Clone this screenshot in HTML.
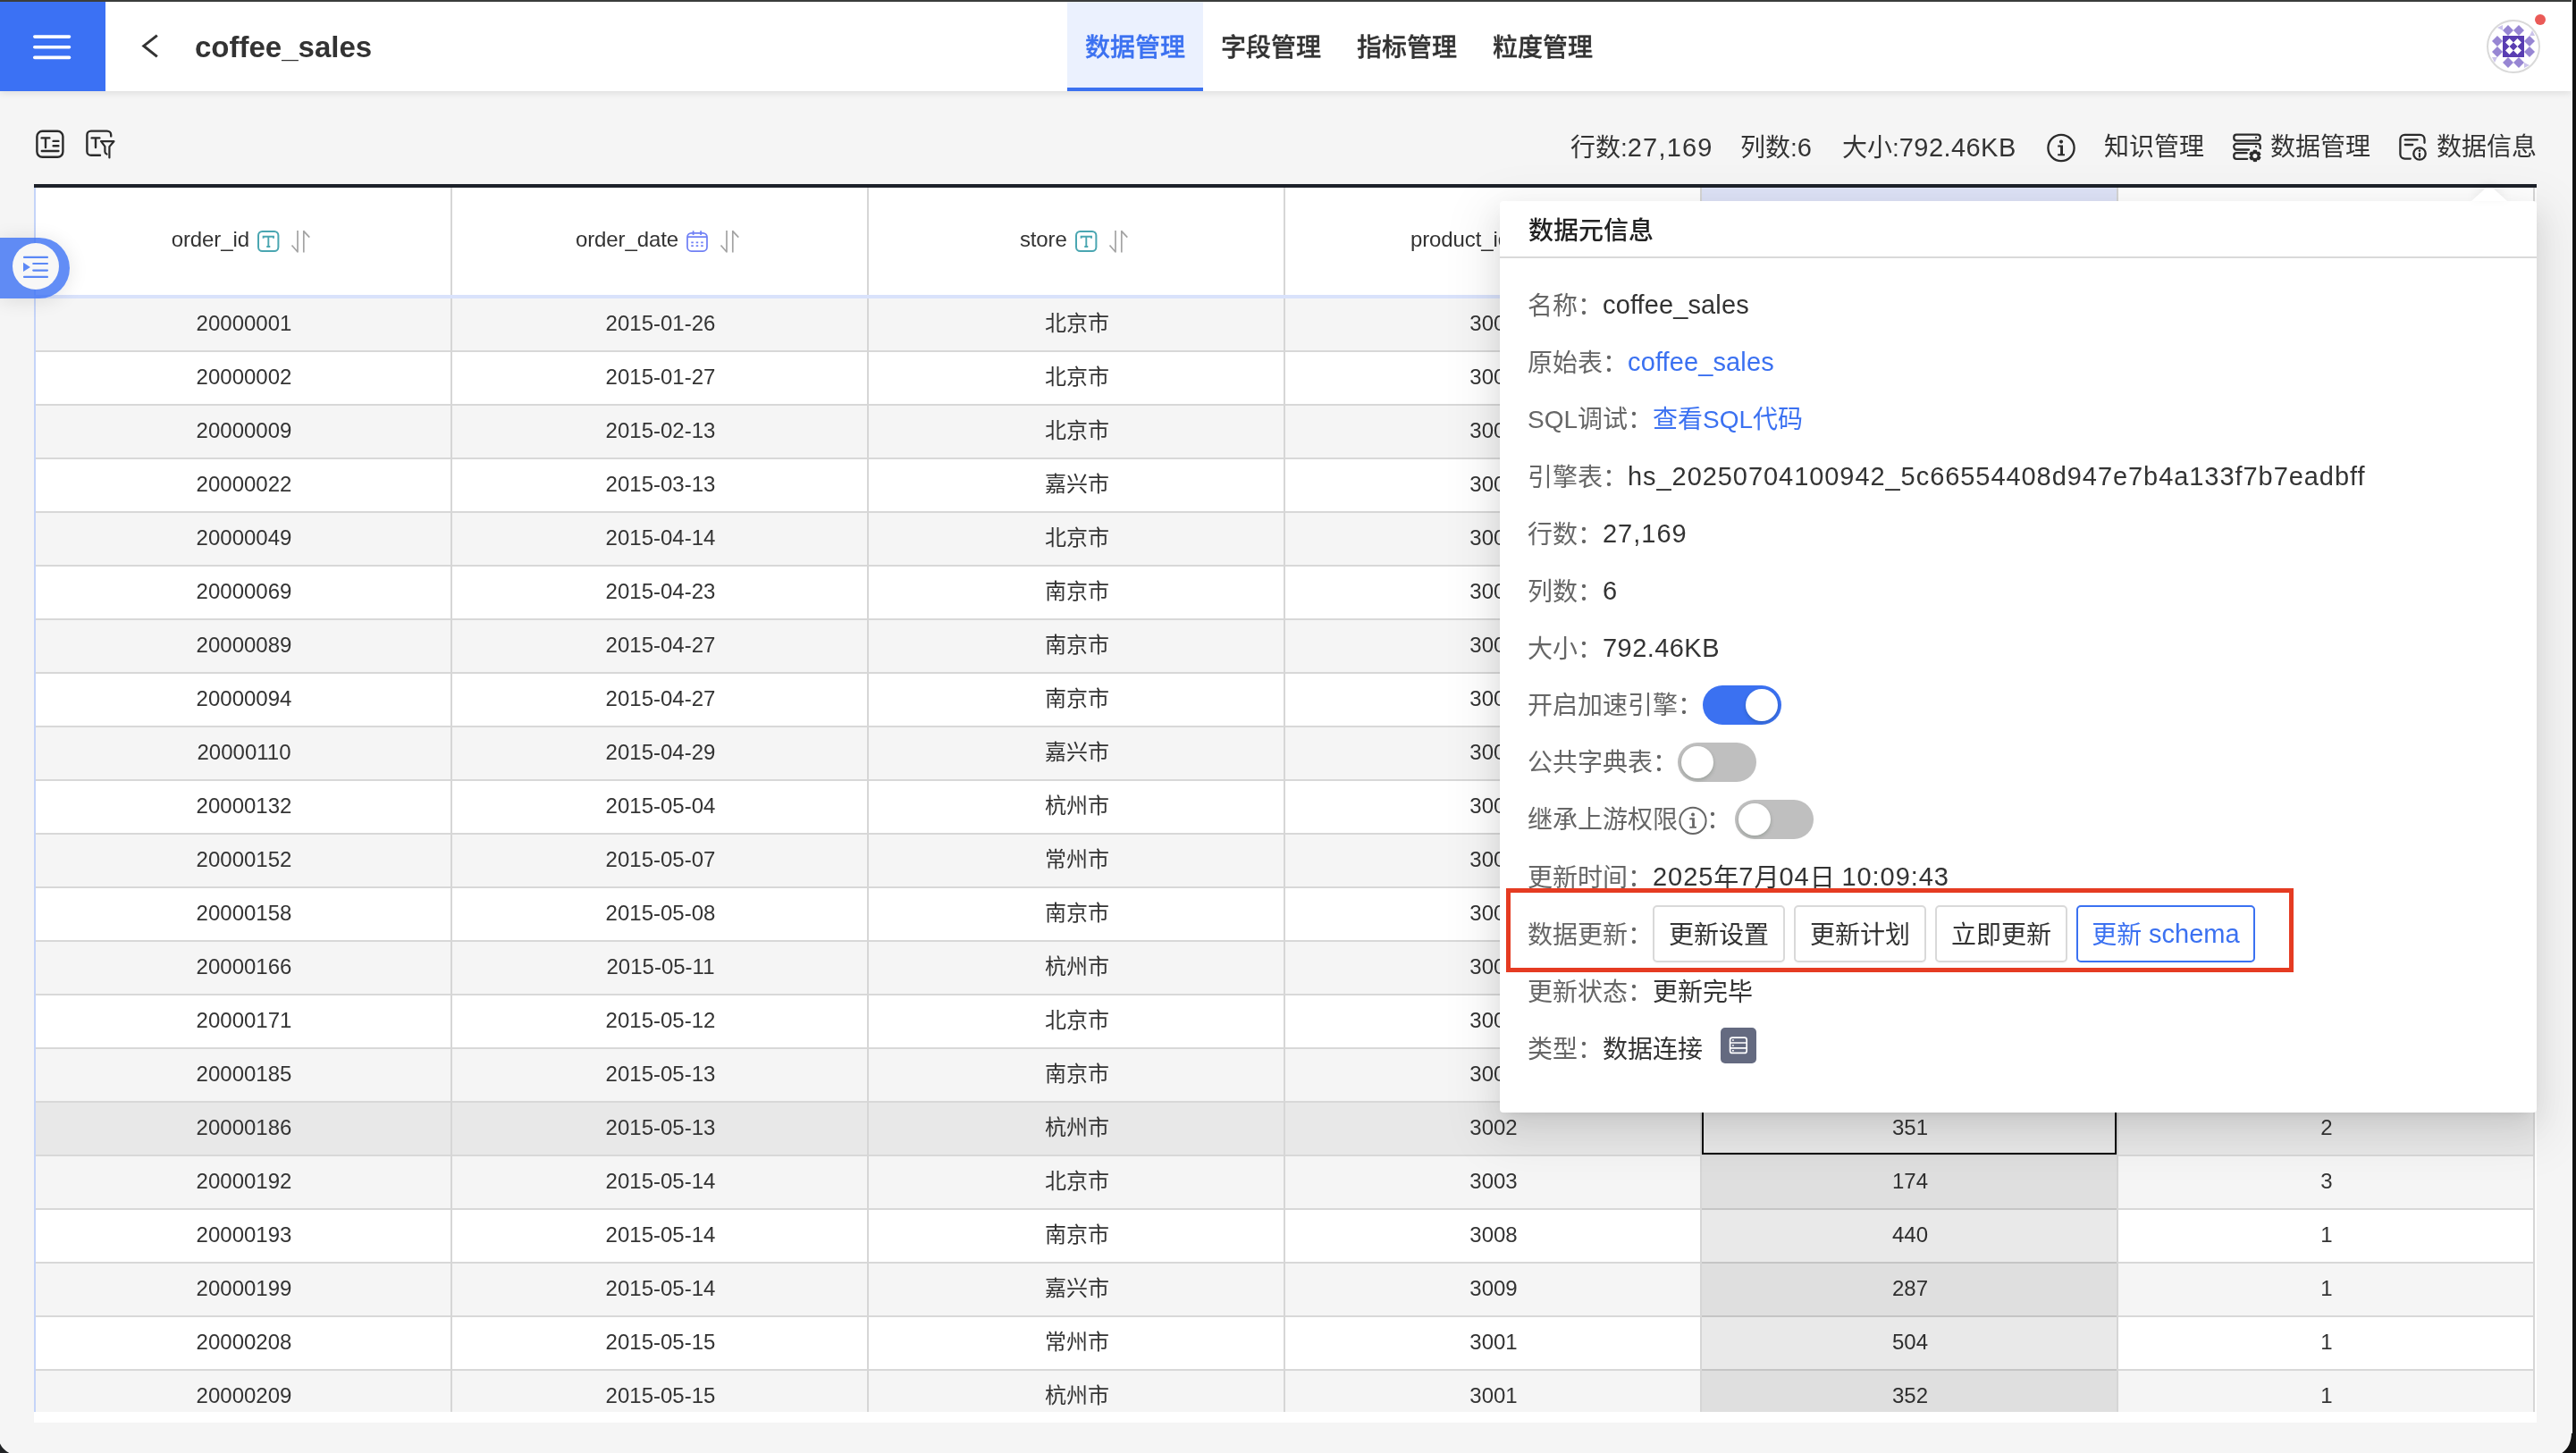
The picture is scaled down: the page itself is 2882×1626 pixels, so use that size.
<!DOCTYPE html>
<html lang="zh-CN">
<head>
<meta charset="utf-8">
<title>coffee_sales</title>
<style>
*{box-sizing:border-box;margin:0;padding:0}
html,body{width:2882px;height:1626px;overflow:hidden;background:#111}
body{position:relative;font-family:"Liberation Sans","Noto Sans CJK SC",sans-serif;color:#333;-webkit-font-smoothing:antialiased}
.abs{position:absolute}
#win{position:absolute;left:0;top:0;width:2877px;height:1626px;background:#f5f5f5;overflow:hidden;will-change:transform}
#wstrip{position:absolute;left:2877px;top:0;width:1px;height:1604px;background:#fff}
#topbar{position:absolute;left:0;top:0;width:2877px;height:2px;background:#3b3d3c;z-index:50}
#hdr{position:absolute;left:0;top:2px;width:2877px;height:100px;background:#fff;box-shadow:0 2px 8px rgba(0,0,0,.10);z-index:5}
#menu{position:absolute;left:0;top:0;width:118px;height:100px;background:#3b71f4}
#title{position:absolute;left:218px;top:31px;font-size:33px;line-height:40px;font-weight:700;color:#333;white-space:nowrap;letter-spacing:0}
.tab{position:absolute;top:0;width:152px;height:100px;text-align:center;font-size:28px;line-height:104px;font-weight:500;color:#333;white-space:nowrap;-webkit-text-stroke:0.35px currentColor}
.tab.on{background:#ebf1fe;color:#3b71f1;border-bottom:4px solid #3b71f1}
#tools{position:absolute;left:0;top:102px;width:2877px;height:104px}
.tt{position:absolute;top:143px;font-size:28px;line-height:44px;color:#333;white-space:nowrap}
/* table */
#tbl{position:absolute;left:38px;top:210px;width:2800px;height:1370px;background:#fff;overflow:hidden}
#tline{position:absolute;left:38px;top:206px;width:2800px;height:4px;background:#1d2129;z-index:3}
#tfoot{position:absolute;left:38px;top:1580px;width:2800px;height:12px;background:#fff}
.th{position:absolute;top:0;height:120px;width:464px;font-size:24px;color:#333}
.th .lab{position:absolute;top:42px;line-height:36px;white-space:nowrap}
.row{position:absolute;left:2px;width:2796px;border-bottom:2px solid #d8d8d8}
.row.odd{background:#f5f5f5}
.row.even{background:#fff}
.row.hov{background:#e8e8e8}
.c{position:absolute;top:0;width:464px;height:58px;line-height:56px;padding-right:2px;text-align:center;font-size:24px;color:#333;white-space:nowrap}
.c.cj{font-family:"Liberation Sans","Noto Sans CJK SC",sans-serif}
.vline{position:absolute;top:0;width:2px;height:1370px;background:#d6d6d6;z-index:2}
#lb{position:absolute;left:0;top:0;width:2px;height:1370px;background:#c5d4f8;z-index:2}
#hline{position:absolute;left:0;top:120px;width:2800px;height:4px;background:#d9e2fb;z-index:2}
#col5h{position:absolute;left:1866px;top:0;width:464px;height:120px;background:#dfe4f8}
.col5{position:absolute;left:1866px;width:464px;background:rgba(0,0,0,.085);z-index:1}
#sel{position:absolute;left:1866px;top:1024px;width:464px;height:58px;border:2px solid #000;z-index:3}
/* float */
#flt{position:absolute;left:0;top:266px;width:78px;height:68px;border-radius:0 34px 34px 0;background:rgba(59,113,244,.8);box-shadow:0 2px 22px rgba(0,0,0,.11);z-index:6}
#flt i{position:absolute;left:14px;top:6px;width:52px;height:52px;border-radius:50%;background:#f7f7f7}
/* popup */
#pop{position:absolute;left:1678px;top:225px;width:1160px;height:1020px;background:#fff;border-radius:4px;box-shadow:0 18px 56px 16px rgba(0,0,0,.065),0 12px 32px rgba(0,0,0,.08),0 6px 12px -8px rgba(0,0,0,.12);z-index:10}
#pop .ttl{position:absolute;left:32px;top:13.5px;font-size:28px;line-height:40px;font-weight:500;color:#222;white-space:nowrap}
#pop .hr{position:absolute;left:0;top:62px;width:1160px;height:2px;background:#d9d9d9}
.pr{position:absolute;left:31px;height:44px;line-height:44px;font-size:28px;white-space:nowrap;color:#333}
.pr .l{color:#666}
.pr .a{color:#3b71f1}
.sw{position:absolute;width:88px;height:44px;border-radius:22px;background:#bfbfbf}
.sw i{position:absolute;left:4px;top:4px;width:36px;height:36px;border-radius:50%;background:#fff;box-shadow:0 2px 4px rgba(0,35,11,.2)}
.sw.on{background:#3b71f1}
.sw.on i{left:48px}
.btn{position:absolute;top:788px;height:64px;border:2px solid #d9d9d9;border-radius:5px;background:#fff;font-size:28px;line-height:63px;text-align:center;color:#333;white-space:nowrap;box-shadow:0 2px 0 rgba(0,0,0,.015)}
.btn.pri{border-color:#3b71f1;color:#3b71f1}
#red{position:absolute;left:7px;top:769px;width:881px;height:94px;border:5px solid #e53b22}
#arrow{position:absolute;left:1087px;top:-15px;width:40px;height:15px;filter:drop-shadow(0 -3px 5px rgba(0,0,0,.07))}
svg{display:block;overflow:visible}

.th{display:flex;align-items:center;justify-content:center;padding-right:5.5px}
.th .lab{position:relative;top:-2.500px;line-height:36px}
.th .ic{margin-left:9.300px}
.th .so{margin-left:13.600px;margin-top:0.5px}
.n{font-size:29px}
.th .lab{letter-spacing:-0.1px}
.row.last{border-bottom:0}
#pop .n{position:relative;top:-1px}

</style>
</head>
<body>
<div id="win">
  <div id="topbar"></div>
  <div id="hdr">
    <div id="menu">
      <svg class="abs" style="left:0;top:0" width="118" height="100" viewBox="0 0 118 100"><g fill="#fff"><rect x="37" y="37.3" width="42.3" height="3.6" rx="1.8"/><rect x="37" y="49" width="42.3" height="3.6" rx="1.8"/><rect x="37" y="60.6" width="42.3" height="3.6" rx="1.8"/></g></svg>
    </div>
    <svg class="abs" style="left:150px;top:30px" width="40" height="44" viewBox="150 32 40 44"><polyline points="175.8,39.6 160.8,51.4 175.8,63.4" fill="none" stroke="#333" stroke-width="3" stroke-linejoin="miter"/></svg>
    <div id="title">coffee_sales</div>
    <div class="tab on" style="left:1194px">数据管理</div>
    <div class="tab" style="left:1346px">字段管理</div>
    <div class="tab" style="left:1498px">指标管理</div>
    <div class="tab" style="left:1650px">粒度管理</div>
    <svg class="abs" style="left:2772px;top:6px" width="90" height="90" viewBox="2772 8 90 90">
      <circle cx="2812" cy="52" r="29" fill="#fff" stroke="#d9d9d9" stroke-width="2"/>
      <rect x="2800" y="40" width="24" height="24" fill="#593db2"/>
      <g fill="#fff"><path d="M2807.5 43l4.5 4.5-4.5 4.5-4.5-4.5z"/><path d="M2816.5 43l4.500 4.500-4.500 4.500-4.500-4.500z"/><path d="M2807.5 52l4.500 4.500-4.500 4.500-4.500-4.500z"/><path d="M2816.5 52l4.500 4.500-4.500 4.500-4.500-4.500z"/></g>
      <g fill="#9786d3">
        <path d="M2806 28l6 6-6 6-6-6z"/><path d="M2818 28l6 6-6 6-6-6z"/>
        <path d="M2806 64l6 6-6 6-6-6z"/><path d="M2818 64l6 6-6 6-6-6z"/>
        <path d="M2794 40l6 6-6 6-6-6z"/><path d="M2794 52l6 6-6 6-6-6z"/>
        <path d="M2830 40l6 6-6 6-6-6z"/><path d="M2830 52l6 6-6 6-6-6z"/>
      </g>
      <g fill="#cbc3ea">
        <path d="M2794 31L2800 28L2800 34z"/>
        <path d="M2833 34L2836 40L2830 40z"/>
        <path d="M2830 73L2824 76L2824 70z"/>
        <path d="M2791 70L2788 64L2794 64z"/>
      </g>
      <circle cx="2842" cy="22" r="6" fill="#ea5a57"/>
    </svg>
  </div>

  <svg class="abs" style="left:30px;top:136px" width="110" height="50" viewBox="30 136 110 50" fill="none" stroke="#2b2b2b" stroke-width="2.4" stroke-linecap="round" stroke-linejoin="round">
    <rect x="41.4" y="146.8" width="29" height="29" rx="6"/>
    <path d="M46.6 154.4h8.8M51 154.4v10.6M59.6 157.9h5.8M59.6 163.3h5.8M46.8 169h18.6"/>
    <path d="M124.2 152.4v-1.4a4.4 4.4 0 0 0-4.4-4.400h-18a4.400 4.400 0 0 0-4.400 4.400v18.400a4.400 4.400 0 0 0 4.400 4.400h10.200"/>
    <path d="M102.600 154.400h8.800M107 154.400v10.600"/>
    <path d="M113 158.200h14.400l-5 5.900v12.300M113 158.200l4.400 5.700v6q0.100 1.900 2.100 2.700" stroke-width="2.200"/>
  </svg>
  <div class="tt" style="left:1757px">行数:<span class="n" style="letter-spacing:1.20px">27,169</span></div>
  <div class="tt" style="left:1947px">列数:<span class="n" style="letter-spacing:0.90px">6</span></div>
  <div class="tt" style="left:2061px">大小:<span class="n" style="letter-spacing:0.44px">792.46KB</span></div>
  <svg class="abs" style="left:2286px;top:145px" width="40" height="40" viewBox="2286 145 40 40"><circle cx="2306" cy="165.500" r="14.600" fill="none" stroke="#2b2b2b" stroke-width="2.300"/><circle cx="2306" cy="158.600" r="2.050" fill="#2b2b2b"/><path d="M2302.200 162.500h5.800v9.700h2v2h-7.800v-2h2.900v-7.700h-2.900z" fill="#2b2b2b"/></svg>
  <div class="tt" style="left:2354px">知识管理</div>
  <svg class="abs" style="left:2494px;top:145px" width="40" height="40" viewBox="2494 145 40 40" fill="none" stroke="#2b2b2b" stroke-width="2.300" stroke-linecap="round" stroke-linejoin="round">
    <rect x="2499.300" y="150.700" width="29.400" height="6.600" rx="2.900"/>
    <path d="M2528.700 166.200v-2.400a2.900 2.900 0 0 0-2.900-2.900h-23.600a2.900 2.900 0 0 0-2.900 2.900v0.800a2.900 2.900 0 0 0 2.900 2.900h13.800"/>
    <path d="M2513.600 171.200h-11.400a2.900 2.900 0 0 0-2.900 2.900v0.800a2.900 2.900 0 0 0 2.900 2.900h12"/>
    <circle cx="2524" cy="154.100" r="1.100" fill="#2b2b2b" stroke="none"/><circle cx="2524" cy="164.100" r="1.100" fill="#2b2b2b" stroke="none"/>
    <path d="M2521.33 168.09L2524.47 168.09L2525.30 170.24L2527.58 169.88L2529.15 172.61L2527.70 174.40L2529.15 176.19L2527.58 178.92L2525.30 178.56L2524.47 180.71L2521.33 180.71L2520.50 178.56L2518.22 178.92L2516.65 176.19L2518.10 174.40L2516.65 172.61L2518.22 169.88L2520.50 170.24z" fill="#2b2b2b" stroke="#f5f5f5" stroke-width="2.400" paint-order="stroke" stroke-linejoin="round"/>
    <path d="M2521.33 168.09L2524.47 168.09L2525.30 170.24L2527.58 169.88L2529.15 172.61L2527.70 174.40L2529.15 176.19L2527.58 178.92L2525.30 178.56L2524.47 180.71L2521.33 180.71L2520.50 178.56L2518.22 178.92L2516.65 176.19L2518.10 174.40L2516.65 172.61L2518.22 169.88L2520.50 170.24z" fill="#2b2b2b" stroke="#2b2b2b" stroke-width="0.600" stroke-linejoin="round"/>
    <circle cx="2522.900" cy="174.400" r="2.500" fill="#f5f5f5" stroke="none"/>
  </svg>
  <div class="tt" style="left:2540px">数据管理</div>
  <svg class="abs" style="left:2680px;top:145px" width="40" height="40" viewBox="2680 145 40 40" fill="none" stroke="#2b2b2b" stroke-width="2.300" stroke-linecap="round" stroke-linejoin="round">
    <path d="M2712.500 159.800v-3.900a5 5 0 0 0-5-5h-17.100a5 5 0 0 0-5 5v16.700a5 5 0 0 0 5 5h6.400"/>
    <path d="M2690.800 156.400h13.800M2690.800 162h8.400"/>
    <circle cx="2707" cy="172" r="6.700"/>
    <circle cx="2707" cy="168.600" r="1.300" fill="#2b2b2b" stroke="none"/><path d="M2707 171.800v3.800" stroke-width="2.200"/>
  </svg>
  <div class="tt" style="left:2726px">数据信息</div>

  <div id="tline"></div>
  <div id="tbl">
    <div id="col5h"></div>
    <div class="th" style="left:2px"><span class="lab">order_id</span><svg class="ic" width="24.4" height="24" viewBox="0 0 24.4 24" fill="none" stroke="#4aa6b1" stroke-width="2"><rect x="1" y="1" width="22.4" height="22" rx="4.5"/><path d="M6.6 8.800v-2h11.400v2M12.300 6.800v11.200M10.300 18h4" stroke-width="1.900"/></svg><svg class="so" width="20.600" height="24.600" viewBox="0 0 20.600 24.600" fill="none" stroke="#a3a3a3" stroke-width="1.700"><path d="M7 0v24.600M7.300 24.300L0.500 16.500M13.800 24.600v-24.600M13.500 0.300l6.800 7.400"/></svg></div>
    <div class="th" style="left:468px"><span class="lab">order_date</span><svg class="ic" width="24" height="24" viewBox="0 0 24 24" fill="none" stroke="#7080f5" stroke-width="1.750"><rect x="1" y="2.800" width="22" height="20.200" rx="4.500"/><path d="M1 7.200h22M7.600 0.300v4.800M16.100 0.300v4.800"/><path d="M5.300 13.400h2.500M10.700 13.400h2.500M16.200 13.400h2.500M5.300 17.100h2.500M10.700 17.100h2.500M16.200 17.100h2.500" stroke-width="1.800"/></svg><svg class="so" width="20.600" height="24.600" viewBox="0 0 20.600 24.600" fill="none" stroke="#a3a3a3" stroke-width="1.700"><path d="M7 0v24.600M7.300 24.300L0.500 16.500M13.800 24.600v-24.600M13.500 0.300l6.800 7.400"/></svg></div>
    <div class="th" style="left:934px"><span class="lab">store</span><svg class="ic" width="24.4" height="24" viewBox="0 0 24.4 24" fill="none" stroke="#4aa6b1" stroke-width="2"><rect x="1" y="1" width="22.4" height="22" rx="4.5"/><path d="M6.6 8.800v-2h11.400v2M12.300 6.800v11.200M10.300 18h4" stroke-width="1.900"/></svg><svg class="so" width="20.600" height="24.600" viewBox="0 0 20.600 24.600" fill="none" stroke="#a3a3a3" stroke-width="1.700"><path d="M7 0v24.600M7.300 24.300L0.500 16.500M13.800 24.600v-24.600M13.500 0.300l6.800 7.400"/></svg></div>
    <div class="th" style="left:1400px"><span class="lab">product_id</span><svg class="ic" width="24" height="24" viewBox="0 0 24 24" fill="none" stroke="#5b8ff9" stroke-width="2"><rect x="1" y="1" width="22" height="22" rx="4.500"/><path d="M9.500 6.500l-1.500 11M15.500 6.500l-1.500 11M6 10h12.500M5.500 14h12.500" stroke-width="1.600"/></svg><svg class="so" width="20.600" height="24.600" viewBox="0 0 20.600 24.600" fill="none" stroke="#a3a3a3" stroke-width="1.700"><path d="M7 0v24.600M7.300 24.300L0.500 16.500M13.800 24.600v-24.600M13.500 0.300l6.800 7.400"/></svg></div>
    <div class="th" style="left:1866px"><span class="lab">sales</span><svg class="ic" width="24" height="24" viewBox="0 0 24 24" fill="none" stroke="#5b8ff9" stroke-width="2"><rect x="1" y="1" width="22" height="22" rx="4.500"/><path d="M9.500 6.500l-1.500 11M15.500 6.500l-1.500 11M6 10h12.500M5.500 14h12.500" stroke-width="1.600"/></svg><svg class="so" width="20.600" height="24.600" viewBox="0 0 20.600 24.600" fill="none" stroke="#a3a3a3" stroke-width="1.700"><path d="M7 0v24.600M7.300 24.300L0.500 16.500M13.800 24.600v-24.600M13.500 0.300l6.800 7.400"/></svg></div>
    <div class="th" style="left:2332px"><span class="lab">quantity</span><svg class="ic" width="24" height="24" viewBox="0 0 24 24" fill="none" stroke="#5b8ff9" stroke-width="2"><rect x="1" y="1" width="22" height="22" rx="4.500"/><path d="M9.500 6.500l-1.500 11M15.500 6.500l-1.500 11M6 10h12.500M5.500 14h12.500" stroke-width="1.600"/></svg><svg class="so" width="20.600" height="24.600" viewBox="0 0 20.600 24.600" fill="none" stroke="#a3a3a3" stroke-width="1.700"><path d="M7 0v24.600M7.300 24.300L0.500 16.500M13.800 24.600v-24.600M13.500 0.300l6.800 7.400"/></svg></div>
    
<div class="row odd" style="top:124px;height:60px"><div class="c c1" style="left:2px">20000001</div><div class="c c2" style="left:468px">2015-01-26</div><div class="c c3 cj" style="left:934px">北京市</div><div class="c c4" style="left:1400px">3001</div><div class="c c5" style="left:1866px">120</div><div class="c c6" style="left:2332px">1</div></div>
<div class="row even" style="top:184px;height:60px"><div class="c c1" style="left:2px">20000002</div><div class="c c2" style="left:468px">2015-01-27</div><div class="c c3 cj" style="left:934px">北京市</div><div class="c c4" style="left:1400px">3002</div><div class="c c5" style="left:1866px">351</div><div class="c c6" style="left:2332px">1</div></div>
<div class="row odd" style="top:244px;height:60px"><div class="c c1" style="left:2px">20000009</div><div class="c c2" style="left:468px">2015-02-13</div><div class="c c3 cj" style="left:934px">北京市</div><div class="c c4" style="left:1400px">3003</div><div class="c c5" style="left:1866px">174</div><div class="c c6" style="left:2332px">2</div></div>
<div class="row even" style="top:304px;height:60px"><div class="c c1" style="left:2px">20000022</div><div class="c c2" style="left:468px">2015-03-13</div><div class="c c3 cj" style="left:934px">嘉兴市</div><div class="c c4" style="left:1400px">3004</div><div class="c c5" style="left:1866px">440</div><div class="c c6" style="left:2332px">1</div></div>
<div class="row odd" style="top:364px;height:60px"><div class="c c1" style="left:2px">20000049</div><div class="c c2" style="left:468px">2015-04-14</div><div class="c c3 cj" style="left:934px">北京市</div><div class="c c4" style="left:1400px">3005</div><div class="c c5" style="left:1866px">287</div><div class="c c6" style="left:2332px">1</div></div>
<div class="row even" style="top:424px;height:60px"><div class="c c1" style="left:2px">20000069</div><div class="c c2" style="left:468px">2015-04-23</div><div class="c c3 cj" style="left:934px">南京市</div><div class="c c4" style="left:1400px">3006</div><div class="c c5" style="left:1866px">504</div><div class="c c6" style="left:2332px">3</div></div>
<div class="row odd" style="top:484px;height:60px"><div class="c c1" style="left:2px">20000089</div><div class="c c2" style="left:468px">2015-04-27</div><div class="c c3 cj" style="left:934px">南京市</div><div class="c c4" style="left:1400px">3007</div><div class="c c5" style="left:1866px">352</div><div class="c c6" style="left:2332px">1</div></div>
<div class="row even" style="top:544px;height:60px"><div class="c c1" style="left:2px">20000094</div><div class="c c2" style="left:468px">2015-04-27</div><div class="c c3 cj" style="left:934px">南京市</div><div class="c c4" style="left:1400px">3008</div><div class="c c5" style="left:1866px">120</div><div class="c c6" style="left:2332px">2</div></div>
<div class="row odd" style="top:604px;height:60px"><div class="c c1" style="left:2px">20000110</div><div class="c c2" style="left:468px">2015-04-29</div><div class="c c3 cj" style="left:934px">嘉兴市</div><div class="c c4" style="left:1400px">3009</div><div class="c c5" style="left:1866px">351</div><div class="c c6" style="left:2332px">1</div></div>
<div class="row even" style="top:664px;height:60px"><div class="c c1" style="left:2px">20000132</div><div class="c c2" style="left:468px">2015-05-04</div><div class="c c3 cj" style="left:934px">杭州市</div><div class="c c4" style="left:1400px">3001</div><div class="c c5" style="left:1866px">174</div><div class="c c6" style="left:2332px">1</div></div>
<div class="row odd" style="top:724px;height:60px"><div class="c c1" style="left:2px">20000152</div><div class="c c2" style="left:468px">2015-05-07</div><div class="c c3 cj" style="left:934px">常州市</div><div class="c c4" style="left:1400px">3002</div><div class="c c5" style="left:1866px">440</div><div class="c c6" style="left:2332px">1</div></div>
<div class="row even" style="top:784px;height:60px"><div class="c c1" style="left:2px">20000158</div><div class="c c2" style="left:468px">2015-05-08</div><div class="c c3 cj" style="left:934px">南京市</div><div class="c c4" style="left:1400px">3003</div><div class="c c5" style="left:1866px">287</div><div class="c c6" style="left:2332px">2</div></div>
<div class="row odd" style="top:844px;height:60px"><div class="c c1" style="left:2px">20000166</div><div class="c c2" style="left:468px">2015-05-11</div><div class="c c3 cj" style="left:934px">杭州市</div><div class="c c4" style="left:1400px">3004</div><div class="c c5" style="left:1866px">504</div><div class="c c6" style="left:2332px">1</div></div>
<div class="row even" style="top:904px;height:60px"><div class="c c1" style="left:2px">20000171</div><div class="c c2" style="left:468px">2015-05-12</div><div class="c c3 cj" style="left:934px">北京市</div><div class="c c4" style="left:1400px">3005</div><div class="c c5" style="left:1866px">352</div><div class="c c6" style="left:2332px">1</div></div>
<div class="row odd" style="top:964px;height:60px"><div class="c c1" style="left:2px">20000185</div><div class="c c2" style="left:468px">2015-05-13</div><div class="c c3 cj" style="left:934px">南京市</div><div class="c c4" style="left:1400px">3006</div><div class="c c5" style="left:1866px">120</div><div class="c c6" style="left:2332px">1</div></div>
<div class="row even hov" style="top:1024px;height:60px"><div class="c c1" style="left:2px">20000186</div><div class="c c2" style="left:468px">2015-05-13</div><div class="c c3 cj" style="left:934px">杭州市</div><div class="c c4" style="left:1400px">3002</div><div class="c c5" style="left:1866px">351</div><div class="c c6" style="left:2332px">2</div></div>
<div class="row odd" style="top:1084px;height:60px"><div class="c c1" style="left:2px">20000192</div><div class="c c2" style="left:468px">2015-05-14</div><div class="c c3 cj" style="left:934px">北京市</div><div class="c c4" style="left:1400px">3003</div><div class="c c5" style="left:1866px">174</div><div class="c c6" style="left:2332px">3</div></div>
<div class="row even" style="top:1144px;height:60px"><div class="c c1" style="left:2px">20000193</div><div class="c c2" style="left:468px">2015-05-14</div><div class="c c3 cj" style="left:934px">南京市</div><div class="c c4" style="left:1400px">3008</div><div class="c c5" style="left:1866px">440</div><div class="c c6" style="left:2332px">1</div></div>
<div class="row odd" style="top:1204px;height:60px"><div class="c c1" style="left:2px">20000199</div><div class="c c2" style="left:468px">2015-05-14</div><div class="c c3 cj" style="left:934px">嘉兴市</div><div class="c c4" style="left:1400px">3009</div><div class="c c5" style="left:1866px">287</div><div class="c c6" style="left:2332px">1</div></div>
<div class="row even" style="top:1264px;height:60px"><div class="c c1" style="left:2px">20000208</div><div class="c c2" style="left:468px">2015-05-15</div><div class="c c3 cj" style="left:934px">常州市</div><div class="c c4" style="left:1400px">3001</div><div class="c c5" style="left:1866px">504</div><div class="c c6" style="left:2332px">1</div></div>
<div class="row odd last" style="top:1324px;height:46px"><div class="c c1" style="left:2px">20000209</div><div class="c c2" style="left:468px">2015-05-15</div><div class="c c3 cj" style="left:934px">杭州市</div><div class="c c4" style="left:1400px">3001</div><div class="c c5" style="left:1866px">352</div><div class="c c6" style="left:2332px">1</div></div>
    <div class="col5" style="top:124px;height:900px"></div><div class="col5" style="top:1084px;height:286px"></div>
    <div id="lb"></div>
    <div class="vline" style="left:466px"></div>
    <div class="vline" style="left:932px"></div>
    <div class="vline" style="left:1398px"></div>
    <div class="vline" style="left:1864px"></div>
    <div class="vline" style="left:2330px"></div>
    <div class="vline" style="left:2796px"></div>
    <div id="hline"></div>
    <div id="sel"></div>
  </div>
  <div id="tfoot"></div>

  <div id="flt"><i></i>
    <svg class="abs" style="left:0;top:0" width="78" height="68" viewBox="0 0 78 68" fill="none" stroke="#5b88f6" stroke-width="2.100" stroke-linecap="round"><path d="M27 21.900h26M37.200 29h15.800M37.200 36.600h15.800M27 43.900h26"/><path d="M26 27.800l7.900 5.100-7.900 5z" fill="#5b88f6" stroke="none"/></svg>
  </div>

  <div id="pop">
    <svg id="arrow" viewBox="0 0 40 15"><path d="M0 15L16.500 0L23.500 0L40 15z" fill="#fff"/></svg>
    <div class="ttl">数据元信息</div><div class="hr"></div>
    <div class="pr" style="top:95px"><span class="l">名称：</span><span class="v"><span class="n" style="letter-spacing:0.12px">coffee_sales</span></span></div>
    <div class="pr" style="top:159px"><span class="l">原始表：</span><span class="v a"><span class="n" style="letter-spacing:0.12px">coffee_sales</span></span></div>
    <div class="pr" style="top:223px"><span class="l">SQL调试：</span><span class="v a">查看SQL代码</span></div>
    <div class="pr" style="top:287px"><span class="l">引擎表：</span><span class="v"><span class="n" style="letter-spacing:0.94px">hs_20250704100942_5c66554408d947e7b4a133f7b7eadbff</span></span></div>
    <div class="pr" style="top:351px"><span class="l">行数：</span><span class="v"><span class="n" style="letter-spacing:0.98px">27,169</span></span></div>
    <div class="pr" style="top:415px"><span class="l">列数：</span><span class="v"><span class="n" style="letter-spacing:0.90px">6</span></span></div>
    <div class="pr" style="top:479px"><span class="l">大小：</span><span class="v"><span class="n" style="letter-spacing:0.44px">792.46KB</span></span></div>
    <div class="pr" style="top:543px"><span class="l">开启加速引擎：</span></div>
    <div class="sw on" style="left:227px;top:542px"><i></i></div>
    <div class="pr" style="top:607px"><span class="l">公共字典表：</span></div>
    <div class="sw" style="left:199px;top:606px"><i></i></div>
    <div class="pr" style="top:671px"><span class="l">继承上游权限<span style="display:inline-block;width:32px"></span>：</span></div>
    <svg class="abs" style="left:199px;top:676px" width="34" height="34" viewBox="199 676 34 34"><circle cx="216" cy="693.400" r="14.600" fill="none" stroke="#666" stroke-width="2"/><circle cx="216" cy="686.500" r="2" fill="#666"/><path d="M212.200 690.300h5.700v9.600h2v1.900h-7.700v-1.900h2.900v-7.700h-2.900z" fill="#666"/></svg>
    <div class="sw" style="left:263px;top:670px"><i></i></div>
    <div class="pr" style="top:735px"><span class="l">更新时间：</span><span class="v"><span class="n" style="letter-spacing:0.95px">2025</span>年<span class="n" style="letter-spacing:0.95px">7</span>月<span class="n" style="letter-spacing:0.95px">04</span>日 <span class="n" style="letter-spacing:0.95px">10:09:43</span></span></div>
    <div id="red"></div>
    <div class="pr" style="top:800px"><span class="l">数据更新：</span></div>
    <div class="btn" style="left:171px;width:148px">更新设置</div>
    <div class="btn" style="left:329px;width:148px">更新计划</div>
    <div class="btn" style="left:487px;width:148px">立即更新</div>
    <div class="btn pri" style="left:645px;width:200px">更新 <span class="n" style="letter-spacing:0.00px">schema</span></div>
    <div class="pr" style="top:864px"><span class="l">更新状态：</span><span class="v">更新完毕</span></div>
    <div class="pr" style="top:928px"><span class="l">类型：</span><span class="v">数据连接</span></div>
    <div class="abs" style="left:247px;top:925px;width:40px;height:40px;border-radius:5px;background:#646a80"><svg width="40" height="40" viewBox="0 0 40 40" fill="none" stroke="#fff" stroke-width="1.700"><rect x="10.600" y="11.100" width="18.600" height="17.300" rx="2.500"/><path d="M10.600 17h18.600M10.600 22.800h18.600"/><path d="M13 14.100h1.800M13 19.900h1.800M13 25.700h1.800" stroke-width="1.500"/></svg></div>
  </div>
  <svg class="abs" style="left:0;top:1596px;z-index:60" width="2877" height="30" viewBox="0 1596 2877 30"><path d="M0 1615.400Q3 1621.800 10.300 1626L0 1626z" fill="#222426"/><path d="M2877 1603C2877 1613 2873.500 1621 2866.300 1626L2877 1626z" fill="#111"/></svg>
</div>
<div id="wstrip"></div>
</body>
</html>
